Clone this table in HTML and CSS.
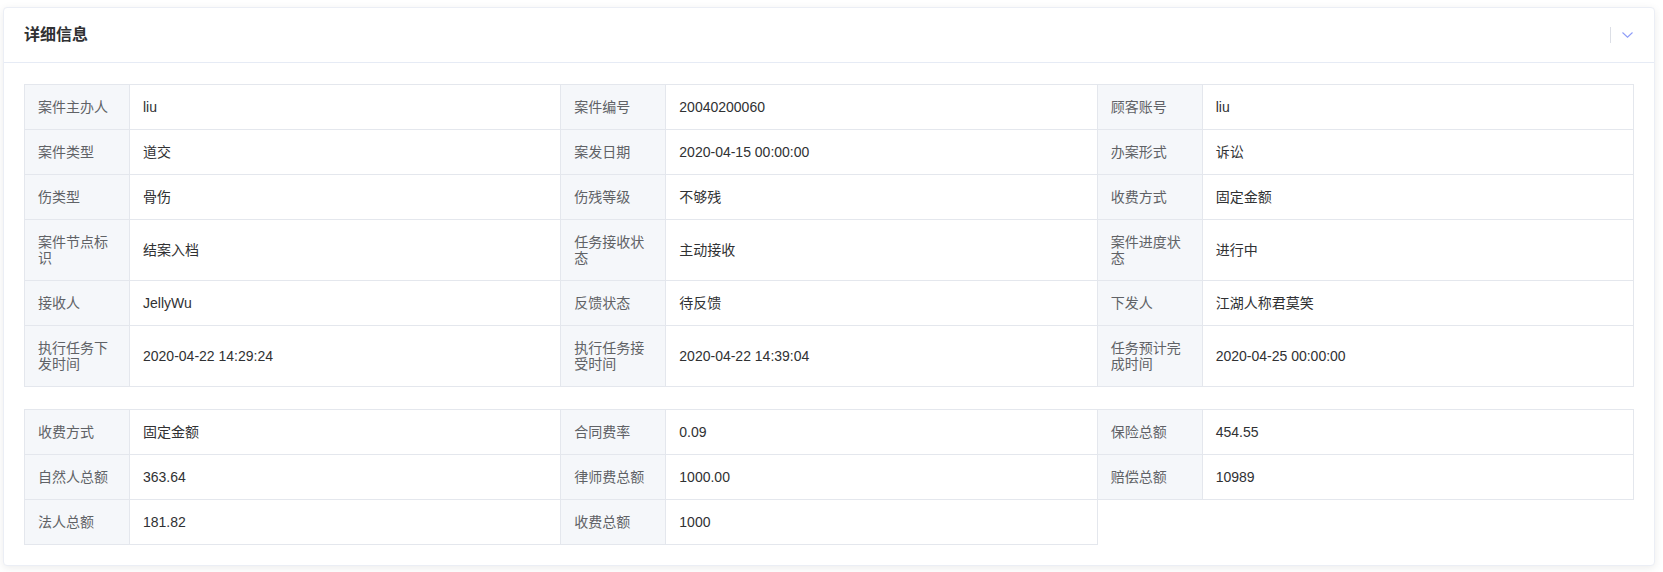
FILE: index.html
```html
<!DOCTYPE html>
<html lang="zh-CN">
<head>
<meta charset="utf-8">
<title>详细信息</title>
<link rel="stylesheet" href="styles.css">
</head>
<body>
<div class="card">
  <div class="card-header">
    <span class="card-title">详细信息</span>
    <div class="header-tools">
      <span class="divider"></span>
      <svg class="chevron" width="11" height="6" viewBox="0 0 11 6"><path d="M0.5 0.5 L5.5 5.2 L10.5 0.5" fill="none" stroke="#8e9cf8" stroke-width="1.1"/></svg>
    </div>
  </div>
  <div class="card-body">
    <div class="desc">
      <div class="lbl">案件主办人</div><div class="val">liu</div>
      <div class="lbl">案件编号</div><div class="val">20040200060</div>
      <div class="lbl">顾客账号</div><div class="val">liu</div>

      <div class="lbl">案件类型</div><div class="val">道交</div>
      <div class="lbl">案发日期</div><div class="val">2020-04-15 00:00:00</div>
      <div class="lbl">办案形式</div><div class="val">诉讼</div>

      <div class="lbl">伤类型</div><div class="val">骨伤</div>
      <div class="lbl">伤残等级</div><div class="val">不够残</div>
      <div class="lbl">收费方式</div><div class="val">固定金额</div>

      <div class="lbl">案件节点标识</div><div class="val">结案入档</div>
      <div class="lbl">任务接收状态</div><div class="val">主动接收</div>
      <div class="lbl">案件进度状态</div><div class="val">进行中</div>

      <div class="lbl">接收人</div><div class="val">JellyWu</div>
      <div class="lbl">反馈状态</div><div class="val">待反馈</div>
      <div class="lbl">下发人</div><div class="val">江湖人称君莫笑</div>

      <div class="lbl">执行任务下发时间</div><div class="val">2020-04-22 14:29:24</div>
      <div class="lbl">执行任务接受时间</div><div class="val">2020-04-22 14:39:04</div>
      <div class="lbl">任务预计完成时间</div><div class="val">2020-04-25 00:00:00</div>
    </div>

    <div class="desc desc-second">
      <div class="lbl">收费方式</div><div class="val">固定金额</div>
      <div class="lbl">合同费率</div><div class="val">0.09</div>
      <div class="lbl">保险总额</div><div class="val">454.55</div>

      <div class="lbl">自然人总额</div><div class="val">363.64</div>
      <div class="lbl">律师费总额</div><div class="val">1000.00</div>
      <div class="lbl">赔偿总额</div><div class="val">10989</div>

      <div class="lbl">法人总额</div><div class="val">181.82</div>
      <div class="lbl">收费总额</div><div class="val">1000</div>
    </div>
  </div>
</div>
</body>
</html>
```

FILE: styles.css
```css
* {
  box-sizing: border-box;
}

html, body {
  margin: 0;
  background: #ffffff;
}

body {
  padding: 7px 8px 6px 3px;
  font-family: "Liberation Sans", "Noto Sans CJK SC", sans-serif;
  font-size: 14px;
  color: #303133;
}

.card {
  border: 1px solid #ebeef5;
  border-radius: 4px;
  background: #ffffff;
  box-shadow: 0 2px 8px 0 rgba(0, 0, 0, 0.08);
}

.card-header {
  height: 55px;
  border-bottom: 1px solid #e6ebf5;
  padding: 0 21px 0 20px;
  display: flex;
  align-items: center;
  justify-content: space-between;
}

.card-title {
  font-size: 16px;
  font-weight: 700;
  line-height: 20px;
  color: #303133;
}

.header-tools {
  display: flex;
  align-items: center;
  gap: 11px;
}

.divider {
  display: block;
  width: 1px;
  height: 16px;
  background: #dcdfe6;
}

.chevron {
  display: block;
}

.card-body {
  padding: 21px 20px 20px 20px;
}

.desc {
  display: grid;
  grid-template-columns: 105px 1fr 105px 1fr 105px 1fr;
  border-top: 1px solid #e4e7ed;
  border-left: 1px solid #e4e7ed;
}

.desc-second {
  margin-top: 22px;
}

.lbl,
.val {
  display: flex;
  align-items: center;
  padding: 14px 13px;
  line-height: 16px;
  border-right: 1px solid #e4e7ed;
  border-bottom: 1px solid #e4e7ed;
  min-width: 0;
}

.lbl {
  background: #f5f7fa;
  color: #606266;
}

.val {
  color: #303133;
}
```
